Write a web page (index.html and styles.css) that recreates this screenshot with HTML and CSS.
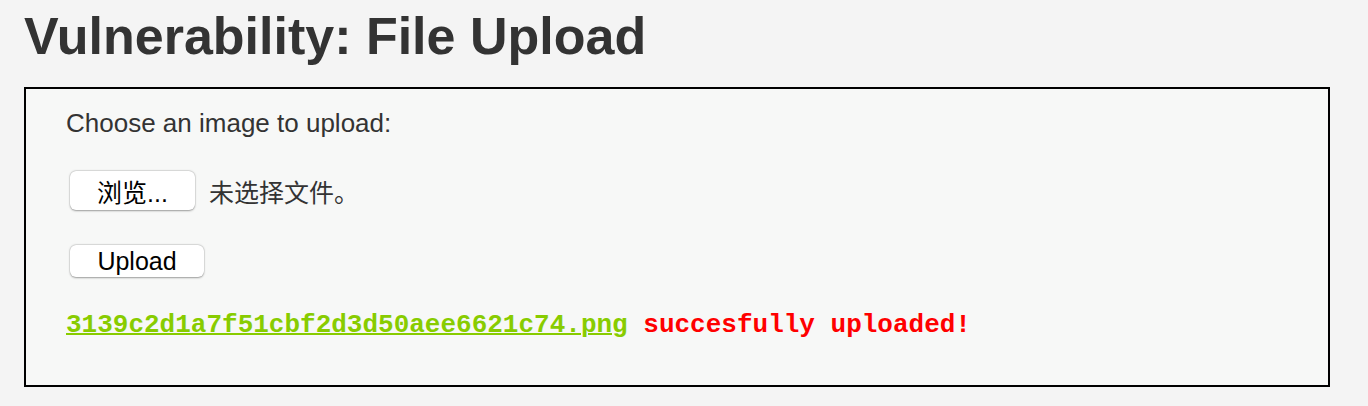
FILE: index.html
```html
<!DOCTYPE html>
<html>
<head>
<meta charset="utf-8">
<link rel="stylesheet" href="styles.css">
</head>
<body>
<div class="page">
  <h1 class="title">Vulnerability: File Upload</h1>
  <div class="vulnerable-box">
    <form class="upload-form">
      <p class="label">Choose an image to upload:</p>
      <div class="file-row">
        <button type="button" class="btn btn-browse">浏览...</button>
        <span class="file-status">未选择文件。</span>
      </div>
      <div class="upload-row">
        <button type="button" class="btn btn-upload">Upload</button>
      </div>
      <pre class="result"><a href="#" class="file-link">3139c2d1a7f51cbf2d3d50aee6621c74.png</a> succesfully uploaded!</pre>
    </form>
  </div>
</div>
</body>
</html>
```

FILE: styles.css
```css
html, body {
  margin: 0;
  padding: 0;
  background: #f4f4f4;
}
body {
  font-family: "Liberation Sans", Arial, "Noto Sans CJK SC", sans-serif;
  color: #333;
}
.page {
  padding: 0 38px 0 24px;
}
.title {
  margin: 0;
  padding-top: 6px;
  height: 81px;
  font-size: 52px;
  line-height: 60px;
  font-weight: bold;
  color: #333;
}
.vulnerable-box {
  border: 2px solid #000;
  background: #f7f8f7;
  height: 296px;
  padding: 0 40px;
}
.upload-form {
  display: flex;
  flex-direction: column;
}
.label {
  margin: 18px 0 0;
  font-size: 26px;
  line-height: 32px;
  color: #333;
}
.file-row {
  display: flex;
  align-items: center;
  gap: 14px;
  margin-top: 32px;
}
.btn {
  font-family: "Liberation Sans", Arial, "Noto Sans CJK SC", sans-serif;
  background: #fff;
  border: none;
  border-radius: 6px;
  box-shadow: 0 0.5px 2px rgba(0,0,0,0.35), 0 0 0 0.5px rgba(0,0,0,0.08);
  color: #000;
  font-size: 25px;
  padding: 0;
  margin-left: 4px;
}
.btn-browse {
  width: 125px;
  height: 39px;
}
.file-status {
  font-size: 25px;
  color: #333;
}
.upload-row {
  margin-top: 35px;
  display: flex;
}
.btn-upload {
  width: 134px;
  height: 32px;
}
.result {
  margin: 33px 0 0;
  font-family: "Liberation Mono", "Courier New", monospace;
  font-size: 26px;
  font-weight: bold;
  line-height: 30px;
  color: #ff0000;
}
.file-link {
  color: #88cc00;
  text-decoration: underline;
  text-decoration-thickness: 2px;
}
```
